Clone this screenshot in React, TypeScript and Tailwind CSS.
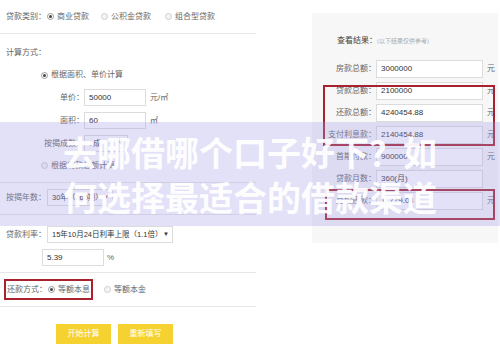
const LABEL_FONT = "font-['Liberation_Sans','Noto_Sans_CJK_SC',sans-serif]";

function Radio({ on }: { on?: boolean }) {
  return (
    <span
      className={
        on
          ? 'inline-flex h-[7px] w-[7px] shrink-0 items-center justify-center rounded-full border border-[#9a9a9a] bg-white'
          : 'inline-flex h-[7px] w-[7px] shrink-0 items-center justify-center rounded-full border border-[#cfcfcf] bg-[#f4f4f4]'
      }
    >
      {on && <span className="h-[3px] w-[3px] rounded-full bg-[#444]" />}
    </span>
  );
}

function Box({ w, children }: { w: string; children?: React.ReactNode }) {
  return (
    <div className={`${w} flex h-[17px] shrink-0 items-center border border-[#dcdcdc] bg-white px-[4px] text-[#333]`}>
      {children}
    </div>
  );
}

function Select({ w, value }: { w: string; value: string }) {
  return (
    <div className={`${w} flex h-[17px] shrink-0 items-center justify-between overflow-hidden border border-[#dcdcdc] bg-white pl-[4px] pr-[3px] text-[7.5px] text-[#333]`}>
      <span className="whitespace-nowrap">{value}</span>
      <span className="text-[6px] text-[#333]">▼</span>
    </div>
  );
}

const RESULTS: { label: string; value: string; unit?: boolean }[] = [
  { label: '房款总额：', value: '3000000', unit: true },
  { label: '贷款总额：', value: '2100000', unit: true },
  { label: '还款总额：', value: '4240454.88', unit: true },
  { label: '支付利息款：', value: '2140454.88', unit: true },
  { label: '首期付款：', value: '900000', unit: true },
  { label: '贷款月数：', value: '360(月)' },
  { label: '月均还款：', value: '11779.04', unit: true },
];

export default function App() {
  return (
    <div className={`relative h-[348px] w-[500px] overflow-hidden bg-white text-[8px] text-[#666] ${LABEL_FONT}`}>
      <div className="flex">
        {/* Form column */}
        <div className="flex w-[256px] shrink-0 flex-col">
          <div className="flex h-[34px] items-center border-b border-[#e6e6e6] pl-[6px]">
            <span>贷款类别：</span>
            <span className="ml-[1px] flex items-center"><Radio on /></span>
            <span className="ml-[3px]">商业贷款</span>
            <span className="ml-[12px] flex items-center"><Radio /></span>
            <span className="ml-[3px]">公积金贷款</span>
            <span className="ml-[14px] flex items-center"><Radio /></span>
            <span className="ml-[3px]">组合型贷款</span>
          </div>

          <div className="flex flex-col border-b border-[#e6e6e6] pt-[10px] pb-[8px]">
            <div className="flex h-[18px] items-center pl-[6px]">计算方式：</div>
            <div className="mt-[4px] flex h-[18px] items-center gap-[3px] pl-[41px]">
              <Radio on />
              <span>根据面积、单价计算</span>
            </div>
            <div className="mt-[5px] flex h-[17px] items-center">
              <span className="w-[84px] text-right">单价：</span>
              <Box w="w-[62px]">50000</Box>
              <span className="ml-[4px]">元/㎡</span>
            </div>
            <div className="mt-[6px] flex h-[17px] items-center">
              <span className="w-[84px] text-right">面积：</span>
              <Box w="w-[62px]">60</Box>
              <span className="ml-[4px]">㎡</span>
            </div>
            <div className="mt-[6px] flex h-[17px] items-center">
              <span className="w-[84px] text-right">按揭成数：</span>
              <Select w="w-[44px]" value="7成" />
            </div>
            <div className="mt-[5px] flex h-[17px] items-center gap-[3px] pl-[41px]">
              <Radio />
              <span>根据贷款总额计算</span>
            </div>
          </div>

          <div className="flex flex-col border-b border-[#e6e6e6] pt-[6px] pb-[8px]">
            <div className="flex h-[17px] items-center pl-[6px]">
              <span>按揭年数：</span>
              <span className="ml-[1px]"><Select w="w-[66px]" value="30年（360期）" /></span>
            </div>
          </div>

          <div className="flex flex-col border-b border-[#e6e6e6] pt-[11px] pb-[6px]">
            <div className="flex h-[17px] items-center pl-[6px]">
              <span>贷款利率：</span>
              <span className="ml-[1px]"><Select w="w-[126px]" value="15年10月24日利率上限（1.1倍）" /></span>
            </div>
            <div className="mt-[6px] flex h-[17px] items-center pl-[42px]">
              <Box w="w-[62px]">5.39</Box>
              <span className="ml-[3px]">%</span>
            </div>
          </div>

          <div className="flex flex-col border-b border-[#e6e6e6] pt-[8px] pb-[8px]">
            <div className="flex h-[17px] items-center pl-[7px]">
              <span>还款方式：</span>
              <span className="ml-[1px] flex items-center"><Radio on /></span>
              <span className="ml-[3px]">等额本息</span>
              <span className="ml-[14px] flex items-center"><Radio /></span>
              <span className="ml-[3px]">等额本金</span>
            </div>
          </div>

          <div className="mt-[17px] flex gap-[7px] pl-[56px]">
            <button type="button" className="flex h-[20px] w-[55px] items-center justify-center bg-[#f5d230] text-white">
              开始计算
            </button>
            <button type="button" className="flex h-[20px] w-[55px] items-center justify-center bg-[#f5d230] text-white">
              重新填写
            </button>
          </div>
        </div>

        {/* Result panel */}
        <div className="mt-[13px] ml-[56px] flex h-[230px] w-[186px] flex-col bg-[#f7f7f7] pt-[19px]">
          <div className="flex h-[18px] items-center pl-[25px]">
            <span className="text-[#444]">查看结果：</span>
            <span className="text-[6px] text-[#aaa]">(以下结果仅供参考)</span>
          </div>
          <div className="mt-[8px] flex flex-col">
            {RESULTS.map((r) => (
              <div key={r.label} className="flex h-[22px] items-center">
                <span className="w-[64px] whitespace-nowrap text-right">{r.label}</span>
                <div className="flex h-[18px] w-[107px] items-center border border-[#dcdcdc] bg-white px-[4px] text-[#333]">
                  {r.value}
                </div>
                {r.unit && <span className="ml-[4px]">元</span>}
              </div>
            ))}
          </div>
        </div>
      </div>

      {/* Annotation boxes */}
      <div className="absolute top-[279px] left-[4px] h-[21px] w-[89px] border-2 border-[#a8212f]" />
      <div className="absolute top-[85px] left-[323px] h-[61px] w-[172px] border-2 border-[#a8212f]" />
      <div className="absolute top-[189px] left-[325px] h-[31px] w-[170px] border-2 border-[#a8212f]" />

      {/* Title banner */}
      <div className="absolute top-[122px] right-0 left-0 flex h-[104px] items-center justify-center bg-[#a29ae8]/30">
        <p className="text-center text-[34px] leading-[45px] font-bold text-white/95 font-['Noto_Sans_CJK_SC',sans-serif]">
          去哪借哪个口子好下？如
          <br />
          何选择最适合的借款渠道
        </p>
      </div>
    </div>
  );
}
